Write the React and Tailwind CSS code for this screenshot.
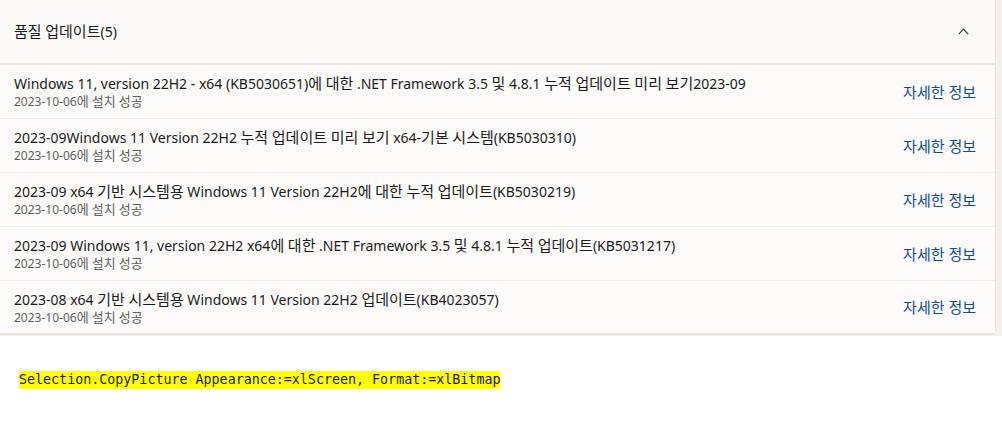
import React from "react";

const updates = [
  "Windows 11, version 22H2 - x64 (KB5030651)에 대한 .NET Framework 3.5 및 4.8.1 누적 업데이트 미리 보기2023-09",
  "2023-09Windows 11 Version 22H2 누적 업데이트 미리 보기 x64-기본 시스템(KB5030310)",
  "2023-09 x64 기반 시스템용 Windows 11 Version 22H2에 대한 누적 업데이트(KB5030219)",
  "2023-09 Windows 11, version 22H2 x64에 대한 .NET Framework 3.5 및 4.8.1 누적 업데이트(KB5031217)",
  "2023-08 x64 기반 시스템용 Windows 11 Version 22H2 업데이트(KB4023057)",
];

const font = { fontFamily: '"Noto Sans", "Noto Sans CJK KR", sans-serif' };

// hangul runs look a bit bigger in the original (Malgun Gothic), so bump them
const Ko = ({ text, big }) =>
  text.split(/([\uAC00-\uD7A3]+)/).map((part, i) =>
    /[\uAC00-\uD7A3]/.test(part) ? (
      <span key={i} className={big}>
        {part}
      </span>
    ) : (
      part
    )
  );

const UpdateRow = ({ title, last }) => (
  <div
    className={
      "flex items-center justify-between pl-[14px] pr-[19px] " +
      (last ? "h-[52px]" : "h-[54px] border-b border-[#efedea]")
    }
  >
    <div className="flex flex-col">
      <span className="text-[14px] leading-[20px] text-[#1b1b1b]">
        <Ko text={title} big="text-[15px]" />
      </span>
      <span className="text-[12px] leading-[16px] text-[#5f5f5f] -mt-[1px]">
        <Ko text="2023-10-06에 설치 성공" big="text-[13px]" />
      </span>
    </div>
    <a className="text-[15px] leading-[20px] text-[#0f4c9c] cursor-pointer">자세한 정보</a>
  </div>
);

export default function App() {
  return (
    <div className="w-[1002px] h-[424px] bg-white overflow-hidden" style={font}>
      {/* settings panel */}
      <div className="bg-[#f4efe8] pr-[6px] pb-[1px]">
        <div className="bg-[#fbfaf9] border-r border-b-2 border-[#e6e2dc] rounded-br-[5px]">
          <div className="flex items-center justify-between h-[65px] pl-[14px] pr-[26px] border-b-2 border-[#e8e6e3]">
            <span className="text-[14px] text-[#1b1b1b] -mt-[1px]">
              <Ko text="품질 업데이트(5)" big="text-[15px]" />
            </span>
            <svg width="11" height="7" viewBox="0 0 11 7" fill="none">
              <path d="M0.8 6.2 L5.5 1.2 L10.2 6.2" stroke="#3a3a3a" strokeWidth="1.2" />
            </svg>
          </div>
          <div className="bg-[#fcfbfa]">
            {updates.map((t, i) => (
              <UpdateRow key={i} title={t} last={i === updates.length - 1} />
            ))}
          </div>
        </div>
      </div>

      {/* code snippet below */}
      <div className="flex pt-[35px] pl-[19px]">
        <div
          className="bg-[#ffff00] text-[#1a1a1a] text-[13.33px] leading-[18px] whitespace-pre"
          style={{ fontFamily: '"DejaVu Sans Mono", "Noto Sans CJK KR", monospace' }}
        >
          Selection.CopyPicture Appearance:=xlScreen, Format:=xlBitmap
        </div>
      </div>
    </div>
  );
}
